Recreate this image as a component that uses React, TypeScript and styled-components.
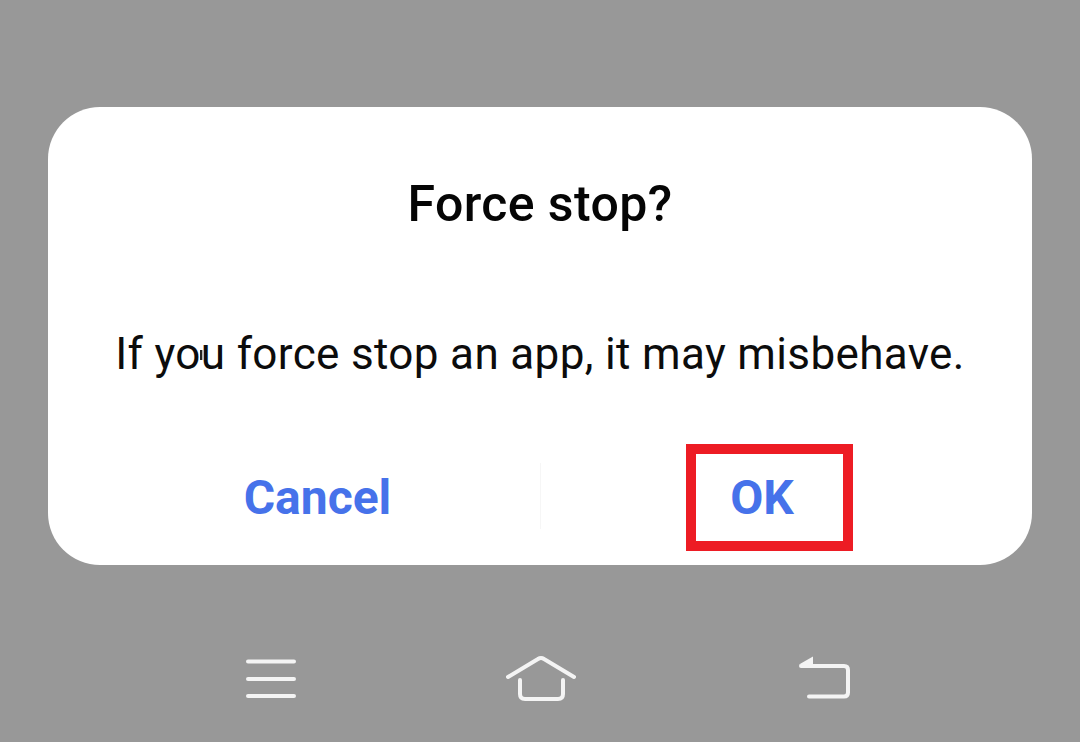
import React from 'react';
import styled, { createGlobalStyle } from 'styled-components';

const GlobalStyle = createGlobalStyle`
  html, body {
    margin    : 0;
    padding   : 0;
    background: #989898;
  }
`;

const Screen = styled.main`
  width          : 1080px;
  height         : 742px;
  padding-top    : 107px;
  box-sizing     : border-box;
  display        : flex;
  flex-direction : column;
  align-items    : center;
  background     : #989898;
  font-family    : Roboto, 'Liberation Sans', sans-serif;
  overflow       : hidden;
`;

const Dialog = styled.section`
  width         : 984px;
  height        : 458px;
  box-sizing    : border-box;
  display       : flex;
  flex-direction: column;
  align-items   : center;
  background    : #ffffff;
  border-radius : 52px;
`;

const Title = styled.h1`
  margin        : 68px 0 0;
  height        : 58px;
  line-height   : 58px;
  font-size     : 50px;
  font-weight   : 500;
  letter-spacing: 0.4px;
  color         : #050505;
`;

const Message = styled.p`
  position      : relative;
  margin        : 92px 0 0;
  height        : 58px;
  line-height   : 58px;
  font-size     : 44px;
  font-weight   : 400;
  letter-spacing: 0.35px;
  color         : #0c0c0c;
  white-space   : nowrap;
`;

const CursorMark = styled.span`
  position  : absolute;
  left      : 85px;
  top       : 25px;
  width     : 4px;
  height    : 10px;
  background: linear-gradient(90deg, #222222 50%, #b5b5b5 50%);
`;

const Actions = styled.div`
  align-self : stretch;
  margin-top : 60px;
  display    : flex;
  align-items: flex-start;
  height     : 108px;
`;

const Action = styled.button<{ $outlined?: boolean; $left: number; $shift?: number }>`
  width          : 167px;
  height         : 107px;
  margin-top     : 1px;
  margin-left    : ${p => p.$left}px;
  padding        : 0 ${p => p.$shift ?? 0}px 0 0;
  box-sizing     : border-box;
  display        : flex;
  align-items    : center;
  justify-content: center;
  background     : transparent;
  border         : 10px solid ${p => (p.$outlined ? '#ed1c24' : 'transparent')};
  font-family    : inherit;
  font-size      : 48px;
  font-weight    : 700;
  color          : #4672ea;
`;

const Divider = styled.div`
  width      : 1px;
  height     : 66px;
  margin-top : 20px;
  margin-left: 139px;
  background : #f6f6f6;
`;

const NavBar = styled.nav`
  width      : 100%;
  margin-top : 88px;
  height     : 50px;
  display    : flex;
  align-items: center;
`;

const NavIcon = styled.svg<{ $left: number }>`
  margin-left    : ${p => p.$left}px;
  fill           : none;
  stroke         : #f4f4f4;
  stroke-width   : 4;
  stroke-linecap : round;
  stroke-linejoin: round;
  flex-shrink    : 0;
`;

const App = () => {
  return (
    <Screen>
      <GlobalStyle />
      <Dialog>
        <Title>Force stop?</Title>
        <Message>
          If you force stop an app, it may misbehave.
          <CursorMark />
        </Message>
        <Actions>
          <Action $left={186}>Cancel</Action>
          <Divider />
          <Action $outlined $left={145} $shift={15}>OK</Action>
        </Actions>
      </Dialog>
      <NavBar>
        <NavIcon $left={246} width="50" height="50" viewBox="0 0 50 50">
          <path d="M2 8.5H48M2 26H48M2 43H48" />
        </NavIcon>
        <NavIcon $left={210} width="70" height="50" viewBox="0 0 70 50">
          <path d="M2 24L32 6Q35 4 38 6L68 24" />
          <path d="M14 27V41Q14 46 19 46H52Q57 46 57 41V27" />
        </NavIcon>
        <NavIcon $left={222} width="54" height="50" viewBox="0 0 54 50">
          <path d="M3 13H46Q50 13 50 17V39.5Q50 43.5 46 43.5H11" />
          <path d="M15 3.5L1 11.5H15Z" fill="#f4f4f4" stroke="none" />
        </NavIcon>
      </NavBar>
    </Screen>
  );
};

export default App;
